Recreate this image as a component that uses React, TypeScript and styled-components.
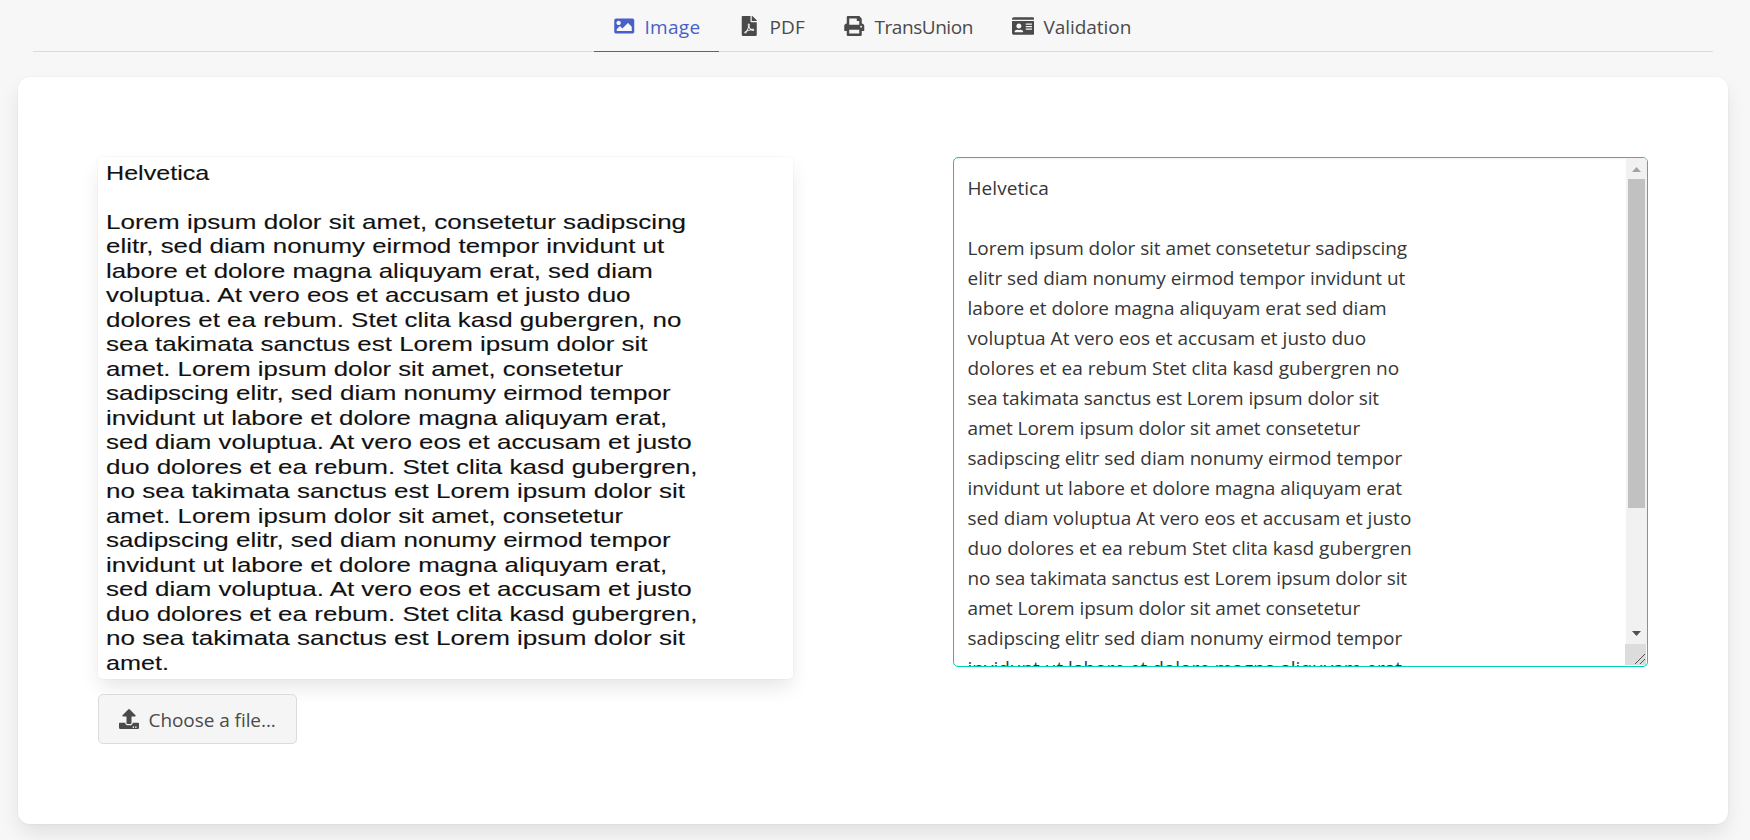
import React, { useLayoutEffect, useRef, useState } from 'react';
import styled, { createGlobalStyle } from 'styled-components';
import { FaFilePdf, FaIdCard, FaImage, FaPrint, FaUpload } from 'react-icons/fa';

const GlobalStyle = createGlobalStyle`
  *, *::before, *::after { box-sizing: border-box; }
  html, body { margin: 0; padding: 0; overflow: hidden; }
  body {
    background: #f7f7f7;
    color: #4a4a4a;
    font-family: "Open Sans", "Noto Sans", sans-serif;
    font-size: 19px;
    line-height: 30px;
  }
`;

const Page = styled.main`
  height: 840px;
  overflow: hidden;
  display: flex;
  flex-direction: column;
`;

const TabBar = styled.nav`
  display: flex;
  justify-content: center;
  height: 52px;
  margin: 0 37px 25px 33px;
  padding-right: 1px;
  border-bottom: 1px solid #dbdbdb;
`;

const Tab = styled.a<{ $width: number; $active?: boolean }>`
  display: flex;
  align-items: center;
  width: ${(p) => p.$width}px;
  height: 52px;
  padding: 3px 0 0 15px;
  border-bottom: 1px solid ${(p) => (p.$active ? '#485fc7' : '#dbdbdb')};
  color: ${(p) => (p.$active ? '#485fc7' : '#4a4a4a')};
`;

const TabIcon = styled.span`
  display: flex;
  align-items: center;
  justify-content: center;
  width: 30px;
  height: 30px;
  margin: -2px 5.5px 0 0;

  svg { width: 22.5px; height: 20px; }
`;

const Box = styled.section`
  display: flex;
  align-items: flex-start;
  height: 747px;
  margin: 0 22px 0 18px;
  padding: 80px;
  gap: 160px;
  border-radius: 12px;
  background: #fff;
  box-shadow: 0 10px 20px -2.5px rgba(10, 10, 10, 0.1), 0 0 0 1px rgba(10, 10, 10, 0.02);
`;

const Column = styled.div`
  flex: 1;
  min-width: 0;
  display: flex;
  flex-direction: column;
  align-items: flex-start;
`;

const Scan = styled.figure`
  width: 100%;
  height: 522px;
  margin: 0 0 15px;
  padding: 3.6px 0 0 8px;
  border-radius: 5px;
  background: #fff;
  color: #111;
  font: 20.4px/24.53px "Liberation Sans", Arial, sans-serif;
  -webkit-text-stroke: 0.12px #111;
  box-shadow: 0 10px 20px -2.5px rgba(10, 10, 10, 0.1), 0 0 0 1px rgba(10, 10, 10, 0.02);
`;

const ScanRow = styled.div`
  height: 24.53px;
`;

const FileButton = styled.button`
  display: flex;
  align-items: center;
  width: 199px;
  height: 50px;
  padding: 2px 0 0 20px;
  border: 1px solid #dbdbdb;
  border-radius: 5px;
  background: #f5f5f5;
  color: #4a4a4a;
  font: inherit;

  svg { width: 20px; height: 20px; margin: -2px 9.5px 0 0; }
`;

const TextArea = styled.div`
  display: flex;
  width: 100%;
  height: 510px;
  border: 1px solid #00d1b2;
  border-radius: 5px;
  overflow: hidden;
  background: #fff;
  color: #363636;
  box-shadow: inset 0 1px 2px rgba(10, 10, 10, 0.05);
`;

const TextContent = styled.div`
  flex: 1;
  padding: 14.5px 0 0 13.5px;
`;

const TextRow = styled.div`
  height: 30px;
`;

const ScrollBar = styled.div`
  display: flex;
  flex-direction: column;
  width: 22px;
`;

const Track = styled.div`
  display: flex;
  flex-direction: column;
  align-items: center;
  height: 486px;
  margin-left: 1px;
  background: #f1f1f1;
`;

const Arrow = styled.span<{ $down?: boolean }>`
  width: 9px;
  height: 5px;
  margin: ${(p) => (p.$down ? '123px 0 0' : '9px 0 7px')};
  background: ${(p) => (p.$down ? '#505050' : '#a3a3a3')};
  clip-path: ${(p) => (p.$down ? 'polygon(0 0, 100% 0, 50% 100%)' : 'polygon(50% 0, 100% 100%, 0 100%)')};
`;

const Thumb = styled.div`
  width: 17px;
  height: 329px;
  background: #c1c1c1;
`;

const Grip = styled.div`
  display: flex;
  align-items: flex-end;
  justify-content: flex-end;
  width: 21px;
  height: 21px;
  padding: 0 1px 1px 0;
  background: #dcdcdc;
`;

const Run = styled.span`
  display: inline-block;
  white-space: pre;
  transform-origin: 0 50%;
`;

type FitProps = { text: string; width: number; mode?: 'space' | 'stretch' };

/* Sets one line of text to a given measure, by tracking or by widening its glyphs. */
function Fit({ text, width, mode = 'space' }: FitProps) {
  const ref = useRef<HTMLSpanElement>(null);
  const [style, setStyle] = useState<React.CSSProperties>({});
  useLayoutEffect(() => {
    const natural = ref.current!.offsetWidth;
    setStyle(
      mode === 'stretch'
        ? { transform: `scaleX(${width / natural})` }
        : { letterSpacing: `${(width - natural) / text.length}px` },
    );
  }, [text, width, mode]);
  return <Run ref={ref} style={style}>{text}</Run>;
}

const tabs = [
  { label: 'Image', icon: <FaImage />, width: 125, measure: 55.5, active: true },
  { label: 'PDF', icon: <FaFilePdf />, width: 105, measure: 35.5 },
  { label: 'TransUnion', icon: <FaPrint />, width: 169, measure: 98.5 },
  { label: 'Validation', icon: <FaIdCard />, width: 158, measure: 87.5 },
];

const scanLines: [string, number][] = [
  ['Helvetica', 103.5],
  ['', 0],
  ['Lorem ipsum dolor sit amet, consetetur sadipscing', 579.5],
  ['elitr, sed diam nonumy eirmod tempor invidunt ut', 558.5],
  ['labore et dolore magna aliquyam erat, sed diam', 547],
  ['voluptua. At vero eos et accusam et justo duo', 524],
  ['dolores et ea rebum. Stet clita kasd gubergren, no', 575],
  ['sea takimata sanctus est Lorem ipsum dolor sit', 541.5],
  ['amet. Lorem ipsum dolor sit amet, consetetur', 517],
  ['sadipscing elitr, sed diam nonumy eirmod tempor', 564.5],
  ['invidunt ut labore et dolore magna aliquyam erat,', 561],
  ['sed diam voluptua. At vero eos et accusam et justo', 585.5],
  ['duo dolores et ea rebum. Stet clita kasd gubergren,', 592],
  ['no sea takimata sanctus est Lorem ipsum dolor sit', 578.5],
  ['amet. Lorem ipsum dolor sit amet, consetetur', 517],
  ['sadipscing elitr, sed diam nonumy eirmod tempor', 564.5],
  ['invidunt ut labore et dolore magna aliquyam erat,', 561],
  ['sed diam voluptua. At vero eos et accusam et justo', 585.5],
  ['duo dolores et ea rebum. Stet clita kasd gubergren,', 592],
  ['no sea takimata sanctus est Lorem ipsum dolor sit', 578.5],
  ['amet.', 63],
];

const textLines: [string, number][] = [
  ['Helvetica', 81.5],
  ['', 0],
  ['Lorem ipsum dolor sit amet consetetur sadipscing', 439.5],
  ['elitr sed diam nonumy eirmod tempor invidunt ut', 437.5],
  ['labore et dolore magna aliquyam erat sed diam', 419],
  ['voluptua At vero eos et accusam et justo duo', 399],
  ['dolores et ea rebum Stet clita kasd gubergren no', 432],
  ['sea takimata sanctus est Lorem ipsum dolor sit', 412],
  ['amet Lorem ipsum dolor sit amet consetetur', 392.5],
  ['sadipscing elitr sed diam nonumy eirmod tempor', 434.5],
  ['invidunt ut labore et dolore magna aliquyam erat', 434.5],
  ['sed diam voluptua At vero eos et accusam et justo', 444],
  ['duo dolores et ea rebum Stet clita kasd gubergren', 444],
  ['no sea takimata sanctus est Lorem ipsum dolor sit', 440],
  ['amet Lorem ipsum dolor sit amet consetetur', 392.5],
  ['sadipscing elitr sed diam nonumy eirmod tempor', 434.5],
  ['invidunt ut labore et dolore magna aliquyam erat', 434.5],
];

export default function App() {
  return (
    <Page>
      <GlobalStyle />
      <TabBar>
        {tabs.map((t) => (
          <Tab key={t.label} $width={t.width} $active={t.active}>
            <TabIcon>{t.icon}</TabIcon>
            <Fit text={t.label} width={t.measure} />
          </Tab>
        ))}
      </TabBar>
      <Box>
        <Column>
          <Scan>
            {scanLines.map(([text, width], i) => (
              <ScanRow key={i}>{text && <Fit text={text} width={width} mode="stretch" />}</ScanRow>
            ))}
          </Scan>
          <FileButton>
            <FaUpload />
            <Fit text="Choose a file..." width={127} />
          </FileButton>
        </Column>
        <Column>
          <TextArea>
            <TextContent>
              {textLines.map(([text, width], i) => (
                <TextRow key={i}>{text && <Fit text={text} width={width} />}</TextRow>
              ))}
            </TextContent>
            <ScrollBar>
              <Track>
                <Arrow />
                <Thumb />
                <Arrow $down />
              </Track>
              <Grip>
                <svg width="10" height="10" viewBox="0 0 10 10" stroke="#505050" strokeWidth="1">
                  <path d="M0 10L10 0M5 10L10 5" />
                </svg>
              </Grip>
            </ScrollBar>
          </TextArea>
        </Column>
      </Box>
    </Page>
  );
}
